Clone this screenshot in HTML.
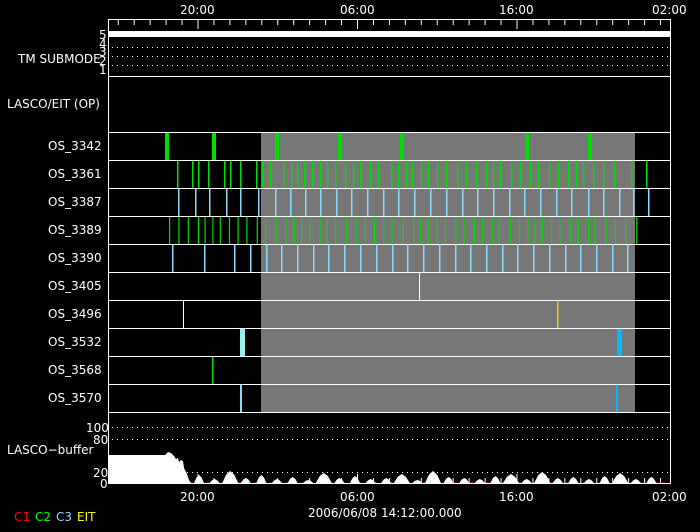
<!DOCTYPE html>
<html><head><meta charset="utf-8"><style>
html,body{margin:0;padding:0;background:#000;width:700px;height:532px;overflow:hidden}
svg{display:block}
text{font-family:"DejaVu Sans","Liberation Sans",sans-serif;font-size:12px;fill:#fff}
</style></head><body>
<svg id="s" width="700" height="532" viewBox="0 0 700 532" xmlns="http://www.w3.org/2000/svg">
<rect width="700" height="532" fill="#000"/>
<rect x="261" y="132" width="374" height="280" fill="#777"/>
<g id="g"></g>
<g stroke="#fff" stroke-width="1" fill="none">
<rect x="108.5" y="19.5" width="562" height="464"/>
<line x1="108" y1="76.5" x2="671" y2="76.5"/>
<line x1="108" y1="132.5" x2="671" y2="132.5"/>
<line x1="108" y1="160.5" x2="671" y2="160.5"/>
<line x1="108" y1="188.5" x2="671" y2="188.5"/>
<line x1="108" y1="216.5" x2="671" y2="216.5"/>
<line x1="108" y1="244.5" x2="671" y2="244.5"/>
<line x1="108" y1="272.5" x2="671" y2="272.5"/>
<line x1="108" y1="300.5" x2="671" y2="300.5"/>
<line x1="108" y1="328.5" x2="671" y2="328.5"/>
<line x1="108" y1="356.5" x2="671" y2="356.5"/>
<line x1="108" y1="384.5" x2="671" y2="384.5"/>
<line x1="108" y1="412.5" x2="671" y2="412.5"/>
</g>
<rect x="109" y="31" width="561" height="6" fill="#fff"/>
<g stroke="#fff" stroke-dasharray="1 4">
<line x1="112" y1="47.5" x2="670" y2="47.5"/><line x1="112" y1="56.5" x2="670" y2="56.5"/><line x1="112" y1="65.5" x2="670" y2="65.5"/>
<line x1="112" y1="427.5" x2="670" y2="427.5"/><line x1="112" y1="439.5" x2="670" y2="439.5"/><line x1="112" y1="472.5" x2="670" y2="472.5"/>
</g>
<text x="180" y="14">20:00</text><text x="340" y="14">06:00</text><text x="499" y="14">16:00</text><text x="652" y="14">02:00</text>
<text x="180" y="501">20:00</text><text x="340" y="501">06:00</text><text x="499" y="501">16:00</text><text x="652" y="501">02:00</text>
<text x="308" y="517">2006/06/08 14:12:00.000</text>
<text x="18" y="63" font-size="11">TM SUBMODE</text>
<text x="99" y="39" font-size="10">5</text><text x="99" y="48" font-size="10">4</text><text x="99" y="56" font-size="10">3</text><text x="99" y="65" font-size="10">2</text><text x="99" y="74" font-size="10">1</text>
<text x="7" y="108">LASCO/EIT (OP)</text>
<text x="48" y="150">OS_3342</text><text x="48" y="178">OS_3361</text><text x="48" y="206">OS_3387</text><text x="48" y="234">OS_3389</text><text x="48" y="262">OS_3390</text><text x="48" y="290">OS_3405</text><text x="48" y="318">OS_3496</text><text x="48" y="346">OS_3532</text><text x="48" y="374">OS_3568</text><text x="48" y="402">OS_3570</text>
<text x="86" y="432">100</text><text x="93" y="444">80</text><text x="7" y="454">LASCO−buffer</text><text x="93" y="477">20</text><text x="100" y="488">0</text>
<text x="14" y="521" font-size="10" style="fill:#f00">C1</text><text x="35" y="521" font-size="10" style="fill:#0f0">C2</text><text x="56" y="521" font-size="10" style="fill:#8df">C3</text><text x="77" y="521" font-size="10" style="fill:#ff0">EIT</text>
</svg>
<script>
var g=document.getElementById('g'),NS='http://www.w3.org/2000/svg';
function el(t,a){var e=document.createElementNS(NS,t);for(var k in a)e.setAttribute(k,a[k]);g.appendChild(e);}
for(var i=-5;i<=29;i++){var x=198+15.95*i;if(x<109||x>670)continue;var L=(i%10==0)?9:5;
el('line',{x1:x,y1:20,x2:x,y2:20+L,stroke:'#fff'});el('line',{x1:x,y1:483,x2:x,y2:483-L,stroke:'#fff'});}
function bars(y,xs,c,w){xs.forEach(function(x){el('rect',{x:x,y:y+1,width:w,height:27,fill:c});});}
bars(132,[165,212,275,338,400,525,588],'#0d0',4);
var r=[177,192,198,208,224,230,240,256,262,270,283,291,297,304,312,320,327,335,345,353,360,370,378,391,398,406,412,421,428,437,446,457,466,476,486,493,500,511,520,530,538,549,558,568,576,583,593,603,614,631,646];
bars(160,r,'#0d0',1.5);
var r2=[178,195,209,226,240,258,275,290,305,320,336,351,367,383,398,414,430,446,462,477,493,509,524,540,556,571,588,603,619,633,648];
bars(188,r2,'#8df',1.5);
var r3=[];for(var x=169;x<640;x+=6.3+((x*7)%5))r3.push(x);bars(216,r3,'#0d0',1.2);
var r4=[172,204,234,250,266,281,297,313,328,344,360,376,392,407,423,439,455,470,486,502,517,533,549,565,580,596,612,627];
bars(244,r4,'#8df',1.5);
bars(272,[419],'#fff',1);bars(300,[183],'#fff',1);bars(300,[557],'#ec0',1.5);
bars(328,[240],'#9ee',5);bars(328,[617],'#0bf',5);bars(356,[212],'#0d0',1.5);bars(384,[240],'#8df',2);bars(384,[616],'#0bf',2);
el('line',{x1:190,y1:483,x2:670,y2:483,stroke:'#f00','stroke-dasharray':'3 5'});
var p='109,483 109,455 165,455 168,452 171,453 174,456 176,459 178,458 179,462 181,460 183,461 184,468 187,474 189,480 191,483 ';
var hs=[8,4,12,5,8,4,6,3,10,5,7,4,5,9,3,12,6,5,4,7,9,4,11,5,6,4,7,10,4,6,11,5,5,3,7,4];
var k=0;for(var c=199;c<665;c+=15.6){var h=hs[k++%hs.length];var w=h>8?8:5;
p+=(c-w)+',483 '+(c-w/2)+','+(483-h*0.7)+' '+c+','+(483-h)+' '+(c+w/2)+','+(483-h*0.7)+' '+(c+w)+',483 ';}
p+='665,483';el('polygon',{points:p,fill:'#fff'});
</script>
</body></html>
